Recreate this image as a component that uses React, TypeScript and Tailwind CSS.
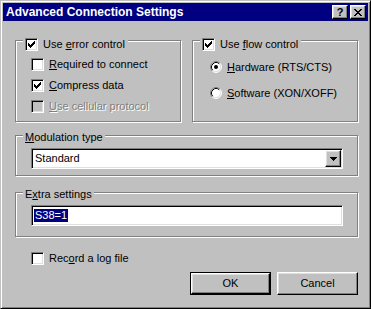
import React from "react";

const Check = () => (
  <svg width="7" height="7" viewBox="0 0 7 7" shapeRendering="crispEdges" className="block">
    <path
      d="M6 0h1v1H6zM5 1h2v1H5zM0 2h1v1H0zM4 2h3v1H4zM0 3h2v1H0zM3 3h3v1H3zM0 4h5v1H0zM1 5h3v1H1zM2 6h1v1H2z"
      fill="#000"
    />
  </svg>
);

function CheckBox({ checked, disabled }: { checked?: boolean; disabled?: boolean }) {
  return (
    <span
      className={
        "flex h-[13px] w-[13px] shrink-0 items-center justify-center border border-t-[#808080] border-l-[#808080] border-r-white border-b-white shadow-[inset_1px_1px_0_#000,inset_-1px_-1px_0_#dfdfdf] " +
        (disabled ? "bg-[#c0c0c0]" : "bg-white")
      }
    >
      {checked && <Check />}
    </span>
  );
}

function Radio({ checked }: { checked?: boolean }) {
  return (
    <svg width="12" height="12" viewBox="0 0 12 12" className="block shrink-0">
      <circle cx="6" cy="6" r="5" fill="#fff" />
      <path d="M2.11 9.89A5.5 5.5 0 0 1 9.89 2.11" fill="none" stroke="#808080" strokeWidth="1" />
      <path d="M9.89 2.11A5.5 5.5 0 0 1 2.11 9.89" fill="none" stroke="#fff" strokeWidth="1" />
      <path d="M2.82 9.18A4.5 4.5 0 0 1 9.18 2.82" fill="none" stroke="#000" strokeWidth="1" />
      <path d="M9.18 2.82A4.5 4.5 0 0 1 2.82 9.18" fill="none" stroke="#dfdfdf" strokeWidth="1" />
      {checked && <circle cx="6" cy="6" r="2" fill="#000" />}
    </svg>
  );
}

const U = ({ children }: { children: React.ReactNode }) => (
  <span className="underline underline-offset-[1px] decoration-[1px]">{children}</span>
);

function CheckRow({
  checked,
  disabled,
  children,
}: {
  checked?: boolean;
  disabled?: boolean;
  children: React.ReactNode;
}) {
  return (
    <div className="flex h-[13px] items-center gap-[5px]">
      <CheckBox checked={checked} disabled={disabled} />
      <span
        className={
          "whitespace-nowrap " +
          (disabled ? "text-[#808080] [text-shadow:1px_1px_0_#fff]" : "")
        }
      >
        {children}
      </span>
    </div>
  );
}

function RadioRow({ checked, children }: { checked?: boolean; children: React.ReactNode }) {
  return (
    <div className="flex h-[12px] items-center gap-[5px]">
      <Radio checked={checked} />
      <span className="whitespace-nowrap">{children}</span>
    </div>
  );
}

const CloseGlyph = () => (
  <svg width="8" height="7" viewBox="0 0 8 7" shapeRendering="crispEdges" className="block">
    <path
      d="M0 0h2v1H0zM6 0h2v1H6zM1 1h2v1H1zM5 1h2v1H5zM2 2h4v1H2zM3 3h2v1H3zM2 4h4v1H2zM1 5h2v1H1zM5 5h2v1H5zM0 6h2v1H0zM6 6h2v1H6z"
      fill="#000"
    />
  </svg>
);

const raised =
  "border border-t-white border-l-white border-r-black border-b-black shadow-[inset_-1px_-1px_0_#808080,inset_1px_1px_0_#dfdfdf] bg-[#c0c0c0]";

const sunken =
  "border border-t-[#808080] border-l-[#808080] border-r-white border-b-white shadow-[inset_1px_1px_0_#000,inset_-1px_-1px_0_#dfdfdf]";

const groupBox =
  "relative border border-[#808080] shadow-[inset_1px_1px_0_#fff,1px_1px_0_#fff]";

export default function App() {
  return (
    <div className="h-[309px] w-[371px] overflow-hidden border border-t-[#c0c0c0] border-l-[#c0c0c0] border-r-black border-b-black bg-[#c0c0c0] p-[2px] font-['Liberation_Sans',Arial,sans-serif] text-[11px] leading-[13px] text-black shadow-[inset_1px_1px_0_#fff,inset_-1px_-1px_0_#808080] select-none">
      {/* Title bar */}
      <div className="flex h-[18px] items-center bg-[#000080] pl-[3px] pr-[2px]">
        <span className="flex-1 text-[12px] font-bold leading-[14px] text-white">Advanced Connection Settings</span>
        <div className="flex gap-[2px]">
          <div className={"flex h-[14px] w-[16px] items-center justify-center " + raised}>
            <span className="text-[11px] font-bold leading-[11px]">?</span>
          </div>
          <div className={"flex h-[14px] w-[16px] items-center justify-center " + raised}>
            <CloseGlyph />
          </div>
        </div>
      </div>

      {/* Client */}
      <div className="pl-[12px] pt-[19px]">
        <div className="grid w-[343px] grid-cols-[166px_166px] gap-x-[11px]">
          <div className={groupBox + " h-[82px]"}>
            <div className="absolute left-[7px] top-[-3px] bg-[#c0c0c0] pl-[2px] pr-[3px]">
              <CheckRow checked>
                Use <U>e</U>rror control
              </CheckRow>
            </div>
            <div className="flex flex-col gap-[8px] pl-[15px] pt-[17px]">
              <CheckRow>
                <U>R</U>equired to connect
              </CheckRow>
              <CheckRow checked>
                <U>C</U>ompress data
              </CheckRow>
              <CheckRow disabled>
                <U>U</U>se cellular protocol
              </CheckRow>
            </div>
          </div>
          <div className={groupBox + " h-[82px]"}>
            <div className="absolute left-[7px] top-[-3px] bg-[#c0c0c0] pl-[2px] pr-[3px]">
              <CheckRow checked>
                Use <U>f</U>low control
              </CheckRow>
            </div>
            <div className="flex flex-col gap-[14px] pl-[17px] pt-[20px]">
              <RadioRow checked>
                <U>H</U>ardware (RTS/CTS)
              </RadioRow>
              <RadioRow>
                <U>S</U>oftware (XON/XOFF)
              </RadioRow>
            </div>
          </div>
        </div>

        {/* Modulation type */}
        <div className={groupBox + " mt-[13px] h-[41px] w-[343px] pl-[15px] pt-[12px]"}>
          <div className="absolute left-[7px] top-[-5px] bg-[#c0c0c0] px-[2px] whitespace-nowrap">
            <U>M</U>odulation type
          </div>
          <div className={"flex h-[21px] w-[312px] items-center bg-white " + sunken}>
            <span className="flex-1 pl-[3px]">Standard</span>
            <div className={"mr-[1px] flex h-[17px] w-[16px] items-center justify-center " + raised}>
              <svg width="7" height="4" viewBox="0 0 7 4" shapeRendering="crispEdges" className="block">
                <path d="M0 0h7v1H0zM1 1h5v1H1zM2 2h3v1H2zM3 3h1v1H3z" fill="#000" />
              </svg>
            </div>
          </div>
        </div>

        {/* Extra settings */}
        <div className={groupBox + " mt-[16px] h-[45px] w-[343px] pl-[15px] pt-[12px]"}>
          <div className="absolute left-[7px] top-[-5px] bg-[#c0c0c0] px-[2px] whitespace-nowrap">
            E<U>x</U>tra settings
          </div>
          <div className={"flex h-[21px] w-[312px] items-center bg-white pl-[2px] " + sunken}>
            <span className="bg-[#000080] px-[1px] text-white">S38=1</span>
          </div>
        </div>

        {/* Record a log file */}
        <div className="ml-[16px] mt-[15px]">
          <CheckRow>
            Rec<U>o</U>rd a log file
          </CheckRow>
        </div>

        {/* Buttons */}
        <div className="mt-[7px] flex w-[343px] justify-end gap-[6px]">
          <div className="h-[23px] w-[81px] border border-black">
            <div className={"flex h-full w-full items-center justify-center " + raised}>OK</div>
          </div>
          <div className={"flex h-[23px] w-[81px] items-center justify-center " + raised}>Cancel</div>
        </div>
      </div>
    </div>
  );
}
